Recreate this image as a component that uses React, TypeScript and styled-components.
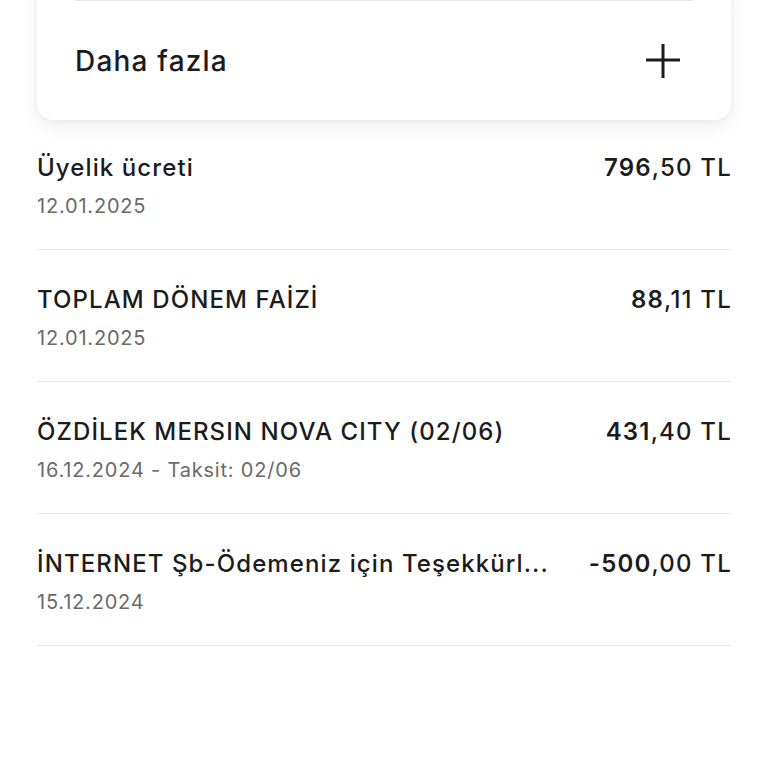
import * as React from 'react';
import styled, { createGlobalStyle } from 'styled-components';

const GlobalStyle = createGlobalStyle`
  html, body {
    margin: 0;
    padding: 0;
    background: #ffffff;
  }
  body {
    font-family: Inter, 'Noto Sans', sans-serif;
    color: #1c1c1c;
    -webkit-font-smoothing: antialiased;
  }
`;

const Page = styled.div`
  width: 768px;
  height: 768px;
  overflow: hidden;
  box-sizing: border-box;
  padding: 0 37px;
`;

const Card = styled.div`
  margin-top: -24px;
  background: #ffffff;
  border-radius: 16px;
  padding: 24px 38px 0;
  box-shadow: 0 6px 18px rgba(0, 0, 0, 0.08), 0 1px 4px rgba(0, 0, 0, 0.04);
`;

const MoreRow = styled.div`
  height: 120px;
  border-top: 1px solid #e8e8e8;
  display: flex;
  align-items: center;
  justify-content: space-between;
  box-sizing: border-box;
  padding-right: 12px;
`;

const MoreLabel = styled.span`
  font-size: 28px;
  font-weight: 500;
  letter-spacing: 1.2px;
`;

const PlusIcon = () => (
  <svg width="36" height="36" viewBox="0 0 36 36" fill="none" stroke="#1c1c1c" strokeWidth="3">
    <line x1="1" y1="17" x2="35" y2="17" />
    <line x1="18" y1="1" x2="18" y2="35" />
  </svg>
);

const List = styled.div`
  display: flex;
  flex-direction: column;
  margin-top: -2px;
`;

const Row = styled.div`
  display: grid;
  grid-template-columns: 1fr auto;
  column-gap: 28px;
  row-gap: 11px;
  padding: 35px 0 31px;
  border-bottom: 1px solid #e6e6e6;
`;

const Title = styled.div`
  font-size: 24px;
  font-weight: 500;
  line-height: 30px;
  letter-spacing: 1.1px;
  white-space: nowrap;
`;

const Amount = styled.div`
  font-size: 24px;
  line-height: 30px;
  font-weight: 500;
  letter-spacing: 1.2px;
  text-align: right;
  white-space: nowrap;
  margin-right: -1px;
`;

const AmountInt = styled.span`
  font-weight: 600;
`;

const SubText = styled.div`
  grid-column: 1 / -1;
  font-size: 20px;
  line-height: 24px;
  letter-spacing: 0.8px;
  color: #6a6a6a;
`;

type Tx = { title: string; int: string; dec: string; sub: string };

const items: Tx[] = [
  { title: 'Üyelik ücreti', int: '796', dec: ',50 TL', sub: '12.01.2025' },
  { title: 'TOPLAM DÖNEM FAİZİ', int: '88', dec: ',11 TL', sub: '12.01.2025' },
  { title: 'ÖZDİLEK MERSIN NOVA CITY (02/06)', int: '431', dec: ',40 TL', sub: '16.12.2024 - Taksit: 02/06' },
  { title: 'İNTERNET Şb-Ödemeniz için Teşekkürl...', int: '-500', dec: ',00 TL', sub: '15.12.2024' },
];

export default function App() {
  return (
    <Page>
      <GlobalStyle />
      <Card>
        <MoreRow>
          <MoreLabel>Daha fazla</MoreLabel>
          <PlusIcon />
        </MoreRow>
      </Card>
      <List>
        {items.map((t) => (
          <Row key={t.title}>
            <Title>{t.title}</Title>
            <Amount>
              <AmountInt>{t.int}</AmountInt>
              {t.dec}
            </Amount>
            <SubText>{t.sub}</SubText>
          </Row>
        ))}
      </List>
    </Page>
  );
}
